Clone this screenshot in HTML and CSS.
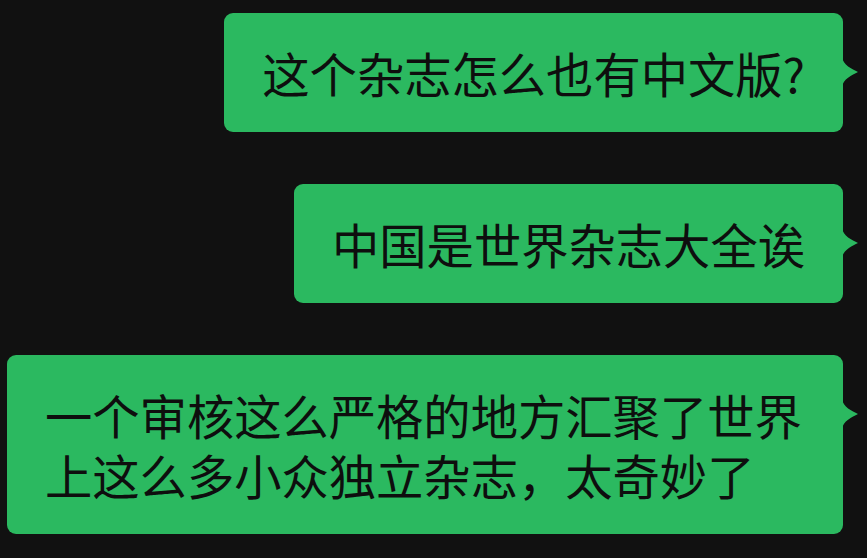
FILE: index.html
```html
<!DOCTYPE html>
<html lang="zh-CN">
<head>
<meta charset="utf-8">
<link rel="stylesheet" href="styles.css">
</head>
<body>
<div class="chat">
  <div class="bubble">这个杂志怎么也有中文版?<svg class="tail" viewBox="0 0 16 30" width="16" height="30"><path d="M0 0 C1 8 10 12 16 15 C10 18 1 22 0 30 Z"/></svg></div>
  <div class="bubble">中国是世界杂志大全诶<svg class="tail" viewBox="0 0 16 30" width="16" height="30"><path d="M0 0 C1 8 10 12 16 15 C10 18 1 22 0 30 Z"/></svg></div>
  <div class="bubble">一个审核这么严格的地方汇聚了世界上这么多小众独立杂志，太奇妙了<svg class="tail" viewBox="0 0 16 30" width="16" height="30"><path d="M0 0 C1 8 10 12 16 15 C10 18 1 22 0 30 Z"/></svg></div>
</div>
</body>
</html>
```
FILE: styles.css
```css
html, body {
  margin: 0;
  padding: 0;
  background: #111111;
  height: 100%;
}
.chat {
  display: flex;
  flex-direction: column;
  align-items: flex-end;
  gap: 52px;
  padding: 13px 24px 0 7px;
}
.bubble {
  position: relative;
  background: #2bb960;
  color: #0e0e0e;
  border-radius: 9px;
  padding: 30px 38px 29px 38px;
  font-family: "Noto Sans CJK SC", "Noto Sans", sans-serif;
  font-size: 47.3px;
  line-height: 60px;
  max-width: 760px;
  box-sizing: content-box;
}
.tail {
  position: absolute;
  right: -15px;
  top: 44px;
  fill: #2bb960;
}
```
